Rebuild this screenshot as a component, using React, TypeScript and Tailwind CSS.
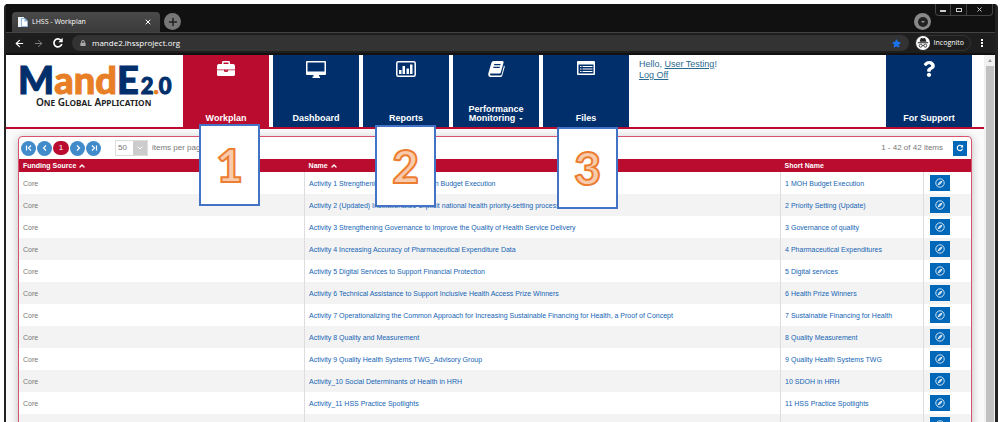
import React from "react";
import clsx from "clsx";
import { ArrowLeft, ArrowRight, ChevronDown, ChevronUp, Plus, X } from "lucide-react";
import { FaLock, FaQuestion, FaStar } from "react-icons/fa";

interface Activity {
  source: string;
  name: string;
  shortName: string;
}

interface NavItem {
  label: string;
  icon: React.ReactNode;
  active?: boolean;
  dropdown?: boolean;
  step?: string;
  stepPlace?: string;
}

const activities: Activity[] = [
  { source: "Core", name: "Activity 1 Strengthening Ministry of Health Budget Execution", shortName: "1 MOH Budget Execution" },
  { source: "Core", name: "Activity 2 (Updated) Institutionalize explicit national health priority-setting processes", shortName: "2 Priority Setting (Update)" },
  { source: "Core", name: "Activity 3 Strengthening Governance to Improve the Quality of Health Service Delivery", shortName: "3 Governance of quality" },
  { source: "Core", name: "Activity 4 Increasing Accuracy of Pharmaceutical Expenditure Data", shortName: "4 Pharmaceutical Expenditures" },
  { source: "Core", name: "Activity 5 Digital Services to Support Financial Protection", shortName: "5 Digital services" },
  { source: "Core", name: "Activity 6 Technical Assistance to Support Inclusive Health Access Prize Winners", shortName: "6 Health Prize Winners" },
  { source: "Core", name: "Activity 7 Operationalizing the Common Approach for Increasing Sustainable Financing for Health, a Proof of Concept", shortName: "7 Sustainable Financing for Health" },
  { source: "Core", name: "Activity 8 Quality and Measurement", shortName: "8 Quality Measurement" },
  { source: "Core", name: "Activity 9 Quality Health Systems TWG_Advisory Group", shortName: "9 Quality Health Systems TWG" },
  { source: "Core", name: "Activity_10 Social Determinants of Health in HRH", shortName: "10 SDOH in HRH" },
  { source: "Core", name: "Activity_11 HSS Practice Spotlights", shortName: "11 HSS Practice Spotlights" },
  { source: "Core", name: "Activity_12 Expanding Financial Protection", shortName: "12 Expanding Financial Protection" },
];

const BriefcaseIcon = () => (
  <svg viewBox="0 0 18 16" className="h-4 w-[18px]">
    <path fill="#fff" d="M0 5Q0 3 2 3H5V1.4Q5 0 6.4 0H11.600Q13 0 13 1.400V3H16Q18 3 18 5V8.400H0Z" />
    <path fill="#fff" d="M0 9.200H7V10.200Q7 11 9 11T11 10.200V9.200H18V13.500Q18 15 16.500 15H1.500Q0 15 0 13.500Z" />
    <path fill="#ba0c2f" d="M7.500 8.400H10.500V10H7.500Z" />
    <path fill="#fff" d="M8.300 8.400H9.700V9.300H8.300Z" />
    <path fill="#ba0c2f" d="M6.500 1.500H11.500V3H6.500Z" />
  </svg>
);

const MonitorIcon = () => (
  <svg viewBox="0 0 20 17" className="h-[17px] w-5">
    <path fill="#fff" fillRule="evenodd" d="M1 0H19Q20 0 20 1V13Q20 14 19 14H13V15.500H14V17H6.500V15.500H7.500V14H1Q0 14 0 13V1Q0 0 1 0ZM1.500 1.500V10.500H18.500V1.500Z" />
  </svg>
);

const ChartIcon = () => (
  <svg viewBox="0 0 20 16" className="h-4 w-5">
    <rect x="0.8" y="0.8" width="18.400" height="14.400" rx="1.500" fill="none" stroke="#fff" strokeWidth="1.500" />
    <path fill="#fff" d="M3 9H5.500V13H3ZM6.500 5H9V13H6.500ZM10.500 7.500H13V13H10.500ZM14 3.500H16.500V13H14Z" />
  </svg>
);

const BookIcon = () => (
  <svg viewBox="0 0 17 16" className="h-4 w-[17px]">
    <path fill="#fff" fillRule="evenodd" d="M5.500 0H14.500Q16 0 15.600 1.500L12.800 11.500Q12.500 12.500 11.500 12.500H3Q1.800 12.500 2 13.500T3.200 14.500H12.500Q13.300 14.500 13.600 13.600L16 4.500Q17 5 16.700 6L14.300 14.500Q13.800 16 12.500 16H2.500Q0 16 0.300 12.500L3.500 1.500Q4 0 5.500 0ZM6.300 3L6 4.200H12.300L12.700 3ZM5.500 5.700L5.200 6.900H11.600L12 5.700Z" />
  </svg>
);

const ListIcon = () => (
  <svg viewBox="0 0 18 14" className="h-3.5 w-[18px]">
    <path fill="#fff" fillRule="evenodd" d="M1 0H17Q18 0 18 1V13Q18 14 17 14H1Q0 14 0 13V1Q0 0 1 0ZM1.500 3.500V12.500H16.500V3.500Z" />
    <path stroke="#fff" strokeWidth="1.200" d="M3 5.500H4.500M5.500 5.500H15.500M3 8H4.500M5.500 8H15.500M3 10.500H4.500M5.500 10.500H15.500" />
  </svg>
);

const CompassIcon = () => (
  <svg viewBox="0 0 10 10" className="size-2.5">
    <circle cx="5" cy="5" r="4.200" fill="none" stroke="#fff" strokeWidth="0.800" />
    <path fill="#fff" d="M7.600 2.400L5.900 5.900L2.400 7.600L4.100 4.100Z" />
    <circle cx="5" cy="5" r="0.600" fill="#0067b9" />
  </svg>
);

const IncognitoIcon = () => (
  <svg viewBox="0 0 12 12" className="size-3">
    <path fill="#222" d="M3.600 1.500Q4 0.800 4.800 1.100L6 1.400L7.200 1.100Q8 0.800 8.400 1.500L9.400 4.800H2.600ZM0.800 5.300H11.200V6.200H0.800Z" />
    <path fill="none" stroke="#222" strokeWidth="0.800" d="M5.200 8.500Q6 8 6.800 8.500" />
    <circle cx="3.700" cy="8.700" r="1.500" fill="none" stroke="#222" strokeWidth="0.800" />
    <circle cx="8.300" cy="8.700" r="1.500" fill="none" stroke="#222" strokeWidth="0.800" />
  </svg>
);

const ReloadIcon = ({ className }: { className: string }) => (
  <svg viewBox="0 0 12 12" className={className}>
    <path fill="none" stroke="#fff" strokeWidth="1.700" d="M9.800 7A4 4 0 1 1 8.900 3.200" />
    <path fill="#fff" d="M10.700 0.800V5.200H6.300Z" />
  </svg>
);

const navItems: NavItem[] = [
  { label: "Workplan", icon: <BriefcaseIcon />, active: true, step: "1", stepPlace: "left-4 top-[69px]" },
  { label: "Dashboard", icon: <MonitorIcon /> },
  { label: "Reports", icon: <ChartIcon />, step: "2", stepPlace: "left-3 top-[70px]" },
  { label: "Performance Monitoring", icon: <BookIcon />, dropdown: true },
  { label: "Files", icon: <ListIcon />, step: "3", stepPlace: "left-3.5 top-[72px]" },
];

const NavTile = ({ item }: { item: NavItem }) => (
  <div className="relative">
    <a
      href="#"
      className={clsx(
        "flex h-[72px] w-[86px] flex-col items-center justify-between pt-1.5 pb-1 text-center text-[9px] leading-[9px] font-bold text-white",
        item.active ? "bg-[#ba0c2f]" : "bg-[#002f6c]"
      )}
    >
      {item.icon}
      <span className="w-[70px]">
        {item.label}
        {item.dropdown && (
          <span className="ml-1 inline-block border-x-2 border-t-2 border-x-transparent border-t-white align-middle" />
        )}
      </span>
    </a>
    {item.step && (
      <div
        className={clsx(
          "absolute z-10 flex h-[82px] w-[61px] items-center justify-center border-2 border-[#4472c4] bg-white font-[Lato,sans-serif] text-[46px] leading-none font-black text-[#f8cbad] [-webkit-text-stroke:2px_#ed7d31]",
          item.stepPlace
        )}
      >
        {item.step}
      </div>
    )}
  </div>
);

const BrowserChrome = () => (
  <header className="font-['Open_Sans',sans-serif] text-[8px] text-white">
    <div className="flex h-7 items-end bg-[#111] pl-1.5">
      <div className="flex h-5 w-[148px] items-center rounded-t bg-gradient-to-b from-[#4a4a4a] to-[#3a3a3a] pr-2 pl-1.5 text-[7px]">
        <svg viewBox="0 0 10 10" className="mr-1 size-2.5">
          <path fill="#eef3f8" d="M0 0H6V10H0Z" />
          <path fill="#8fb8dc" d="M3 1H7L10 4V10H3Z" />
          <path fill="#fff" d="M4 2H6.500V4.500H9V9H4Z" />
        </svg>
        <span className="flex-1">LHSS - Workplan</span>
        <button aria-label="Close tab">
          <X size={8} strokeWidth={3} />
        </button>
      </div>
      <button aria-label="New tab" className="mb-0.5 ml-1 flex size-[17px] items-center justify-center rounded-full bg-[#777] text-[#222]">
        <Plus size={12} strokeWidth={3} />
      </button>
      <div className="flex-1" />
      <button aria-label="Search tabs" className="mr-1 mb-0.5 flex size-[17px] items-center justify-center rounded-full bg-[#888]">
        <span className="flex size-2.5 items-center justify-center rounded-full bg-[#222]">
          <span className="border-x-2 border-t-2 border-x-transparent border-t-[#999]" />
        </span>
      </button>
      <div className="mr-0.5 flex h-3 self-start rounded-b border border-t-0 border-[#444]">
        <button aria-label="Minimize" className="flex w-[15px] justify-center border-r border-[#444] pt-1.5">
          <span className="h-0.5 w-1.5 bg-[#ccc]" />
        </button>
        <button aria-label="Maximize" className="flex w-4 justify-center border-r border-[#444] pt-1">
          <span className="h-1 w-1.5 border border-[#ccc]" />
        </button>
        <button aria-label="Close" className="flex w-[25px] items-center justify-center text-[#ddd]">
          <X size={7} strokeWidth={3} />
        </button>
      </div>
    </div>
    <div className="flex h-[23px] items-center border-t border-[#444] border-b-2 border-b-[#111] bg-[#1e1e1e] pr-3 pl-2">
      <button aria-label="Back">
        <ArrowLeft size={11} strokeWidth={2.5} />
      </button>
      <button aria-label="Forward" className="ml-2 text-[#888]">
        <ArrowRight size={11} strokeWidth={2} />
      </button>
      <button aria-label="Reload" className="mr-2 ml-2">
        <ReloadIcon className="size-3" />
      </button>
      <div className="flex h-4 flex-1 items-center rounded-full bg-[#333] pr-2 pl-2">
        <FaLock size={6} className="mr-1.5 text-[#aaa]" />
        <input
          aria-label="Address"
          defaultValue="mande2.lhssproject.org"
          className="min-w-0 flex-1 bg-transparent text-[8px]"
        />
        <FaStar size={9} className="text-[#1a73e8]" />
      </div>
      <div className="mx-1.5 flex h-4 items-center rounded-full border border-[#333] pr-1.5 text-[7px]">
        <span className="mr-1 flex size-3.5 items-center justify-center rounded-full bg-white">
          <IncognitoIcon />
        </span>
        Incognito
      </div>
      <button aria-label="Menu" className="ml-1 flex flex-col gap-px">
        <span className="size-0.5 bg-white" />
        <span className="size-0.5 bg-white" />
        <span className="size-0.5 bg-white" />
      </button>
    </div>
  </header>
);

const Logo = () => (
  <div className="w-[177px] shrink-0 pt-2 pl-3">
    <div className="flex items-baseline font-[Lato,sans-serif] text-[38px] leading-8 font-black text-[#002f6c] [-webkit-text-stroke:1px]">
      M<span className="text-[#e87f27]">and</span>E
      <span className="ml-0.5 text-[22px] leading-none">
        2<span className="text-[#e87f27]">.</span>0
      </span>
    </div>
    <div className="pl-[18px] font-['Noto_Sans',sans-serif] text-[10px] leading-[10px] font-semibold whitespace-nowrap text-[#222] [font-variant-caps:small-caps]">
      One Global Application
    </div>
  </div>
);

const SiteHeader = () => (
  <div className="flex h-[74px] border-b-2 border-[#ba0c2f] bg-white pr-3">
    <Logo />
    <nav className="flex gap-1">
      {navItems.map((item) => (
        <NavTile key={item.label} item={item} />
      ))}
    </nav>
    <div className="flex-1 pt-1 pl-2.5 text-[9px] leading-[11px] text-[#2a6a8f]">
      Hello, <a href="#" className="underline">User Testing</a>!
      <br />
      <a href="#" className="underline">Log Off</a>
    </div>
    <NavTile item={{ label: "For Support", icon: <FaQuestion size={16} /> }} />
  </div>
);

const pagerButton = "flex size-[15px] items-center justify-center rounded-full bg-[#428bca] text-white";

const PagerIcon = ({ d }: { d: string }) => (
  <svg viewBox="0 0 8 8" className="size-2" fill="none" stroke="currentColor" strokeWidth="1.200">
    <path d={d} />
  </svg>
);

const Pager = () => (
  <div className="flex h-[22px] items-center pr-1 pl-0.5 text-[8px] text-[#777]">
    <div className="flex items-center gap-px">
      <button aria-label="First page" className={pagerButton}><PagerIcon d="M1.500 1.500V6.500M6 1.500L3.500 4L6 6.500" /></button>
      <button aria-label="Previous page" className={pagerButton}><PagerIcon d="M5 1.500L2.500 4L5 6.500" /></button>
      <button className="flex h-3.5 w-4 items-center justify-center rounded-full bg-[#ba0c2f] text-white">1</button>
      <button aria-label="Next page" className={pagerButton}><PagerIcon d="M3 1.500L5.500 4L3 6.500" /></button>
      <button aria-label="Last page" className={pagerButton}><PagerIcon d="M2 1.500L4.500 4L2 6.500M6.500 1.500V6.500" /></button>
    </div>
    <label className="ml-3.5 flex items-center gap-1">
      <span className="grid h-4 w-[33px] grid-cols-[1fr_14px] border border-[#ddd]">
        <select className="col-span-2 col-start-1 row-start-1 appearance-none bg-transparent pl-0.5 text-[8px]">
          <option>50</option>
        </select>
        <span className="pointer-events-none col-start-2 row-start-1 flex items-center justify-center bg-[#ccc] text-white">
          <ChevronDown size={8} strokeWidth={3} />
        </span>
      </span>
      items per page
    </label>
    <span className="ml-auto">1 - 42 of 42 items</span>
    <button aria-label="Refresh" className="ml-2.5 flex h-[15px] w-3.5 items-center justify-center bg-[#0067b9]">
      <ReloadIcon className="size-2" />
    </button>
  </div>
);

const ActivityTable = () => (
  <table className="w-full table-fixed text-left text-[7px] leading-none">
    <colgroup>
      <col className="w-[30%]" />
      <col className="w-[50%]" />
      <col className="w-[15%]" />
      <col className="w-[5%]" />
    </colgroup>
    <thead>
      <tr className="h-[13px] bg-[#ba0c2f] text-white">
        <th className="pl-1">
          <span className="flex items-center gap-0.5">Funding Source <ChevronUp size={8} strokeWidth={4} /></span>
        </th>
        <th className="pl-1">
          <span className="flex items-center gap-0.5">Name <ChevronUp size={8} strokeWidth={4} /></span>
        </th>
        <th className="pl-1">Short Name</th>
        <th />
      </tr>
    </thead>
    <tbody>
      {activities.map((activity) => (
        <tr key={activity.shortName} className="h-[22px] even:bg-[#f3f3f3]">
          <td className="pl-1 text-[#777]">{activity.source}</td>
          <td className="border-l border-[#ddd] pl-1 whitespace-nowrap">
            <a href="#" className="text-[#1464b4]">{activity.name}</a>
          </td>
          <td className="border-l border-[#ddd] pl-1 whitespace-nowrap">
            <a href="#" className="text-[#1464b4]">{activity.shortName}</a>
          </td>
          <td className="border-l border-[#ddd] pl-1.5">
            <button aria-label={`Open ${activity.shortName}`} className="flex h-4 w-5 items-center justify-center bg-[#0067b9]">
              <CompassIcon />
            </button>
          </td>
        </tr>
      ))}
    </tbody>
  </table>
);

const App: React.FC = () => {
  return (
    <div className="flex h-screen flex-col overflow-hidden bg-white pt-1 pr-0.5 pl-1 font-['Liberation_Sans',Arial,sans-serif]">
      <div className="flex min-h-0 flex-1 flex-col rounded-t border-r-3 border-l-2 border-[#222] bg-[#111]">
        <BrowserChrome />
        <div className="flex min-h-0 flex-1 bg-white">
          <main className="min-w-0 flex-1">
            <SiteHeader />
            <div className="bg-[#fafafa] px-3 pt-[7px]">
              <div className="rounded-t border border-[#d9536f] bg-white shadow-[0_2px_8px_#bbb]">
                <Pager />
                <ActivityTable />
              </div>
            </div>
          </main>
          <div className="flex w-[11px] flex-col items-center bg-[#f1f1f1]">
            <span className="my-1 border-x-2 border-b-3 border-x-transparent border-b-[#999]" />
            <div className="w-2 flex-1 bg-[#c1c1c1]" />
          </div>
        </div>
      </div>
    </div>
  );
};

export default App;
